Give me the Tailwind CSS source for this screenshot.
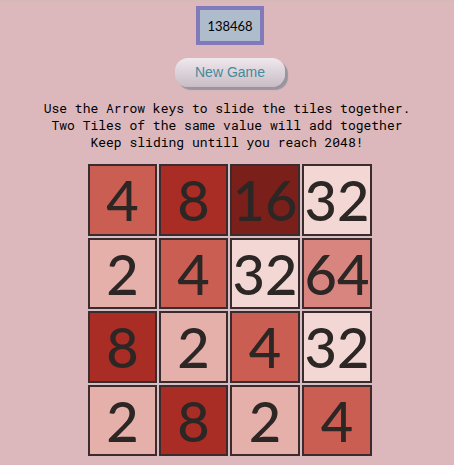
<!DOCTYPE html>
<html lang="en">
<head>
<meta charset="utf-8">
<meta name="viewport" content="width=device-width, initial-scale=1">
<title>2048</title>
<script src="https://cdn.jsdelivr.net/npm/@tailwindcss/browser@4"></script>
</head>
<body class="min-h-screen bg-[#dcb8bc] border-t border-[#d3bab7] text-black">
<main class="flex flex-col items-center pt-[5px]">
  <div class="flex flex-col items-center pl-[6px]">
    <output class="flex h-[39px] w-[68px] items-center justify-center border-4 border-[#8079ba] pt-[2px] font-['Lato',sans-serif] text-[13px] bg-[#afbccb]">138468</output>
    <button type="button" class="mt-[13px] h-[29px] w-[110px] rounded-[13px] bg-linear-to-b from-[#efe9ee] to-[#c9bcc5] pb-[2px] font-['Liberation_Sans',Arial,sans-serif] text-[14px] leading-5 text-[#468a9c] shadow-[3px_3px_1px_#98959f]">New Game</button>
  </div>
  <p class="mt-[13px] text-center font-['Roboto_Mono','DejaVu_Sans_Mono',monospace] text-[13px] leading-[17px]">Use the Arrow keys to slide the tiles together.<br>Two Tiles of the same value will add together<br>Keep sliding untill you reach 2048!</p>
  <div class="pl-[6px]">
    <section aria-label="Game board" class="mt-[13px] grid grid-cols-[69px_69px_70px_70px] grid-rows-[72px_71px_72px_71px] gap-x-[2px] gap-y-[2px] bg-[#d5bfc4] text-center font-['Lato',sans-serif] text-[56px] leading-[72px] font-medium text-[#2c2625] *:flex *:items-center *:justify-center *:border-2 *:border-[#3c2b2d]">
      <div class="bg-[#cb5e53]">4</div><div class="bg-[#a92c25]">8</div><div class="bg-[#7b1f1a]">16</div><div class="bg-[#f2d7d5]">32</div>
      <div class="bg-[#e6b0aa]">2</div><div class="bg-[#cb5e53]">4</div><div class="bg-[#f2d7d5]">32</div><div class="bg-[#d7857e]">64</div>
      <div class="bg-[#a92c25]">8</div><div class="bg-[#e6b0aa]">2</div><div class="bg-[#cb5e53]">4</div><div class="bg-[#f2d7d5]">32</div>
      <div class="bg-[#e6b0aa]">2</div><div class="bg-[#a92c25]">8</div><div class="bg-[#e6b0aa]">2</div><div class="bg-[#cb5e53]">4</div>
    </section>
  </div>
</main>
</body>
</html>
